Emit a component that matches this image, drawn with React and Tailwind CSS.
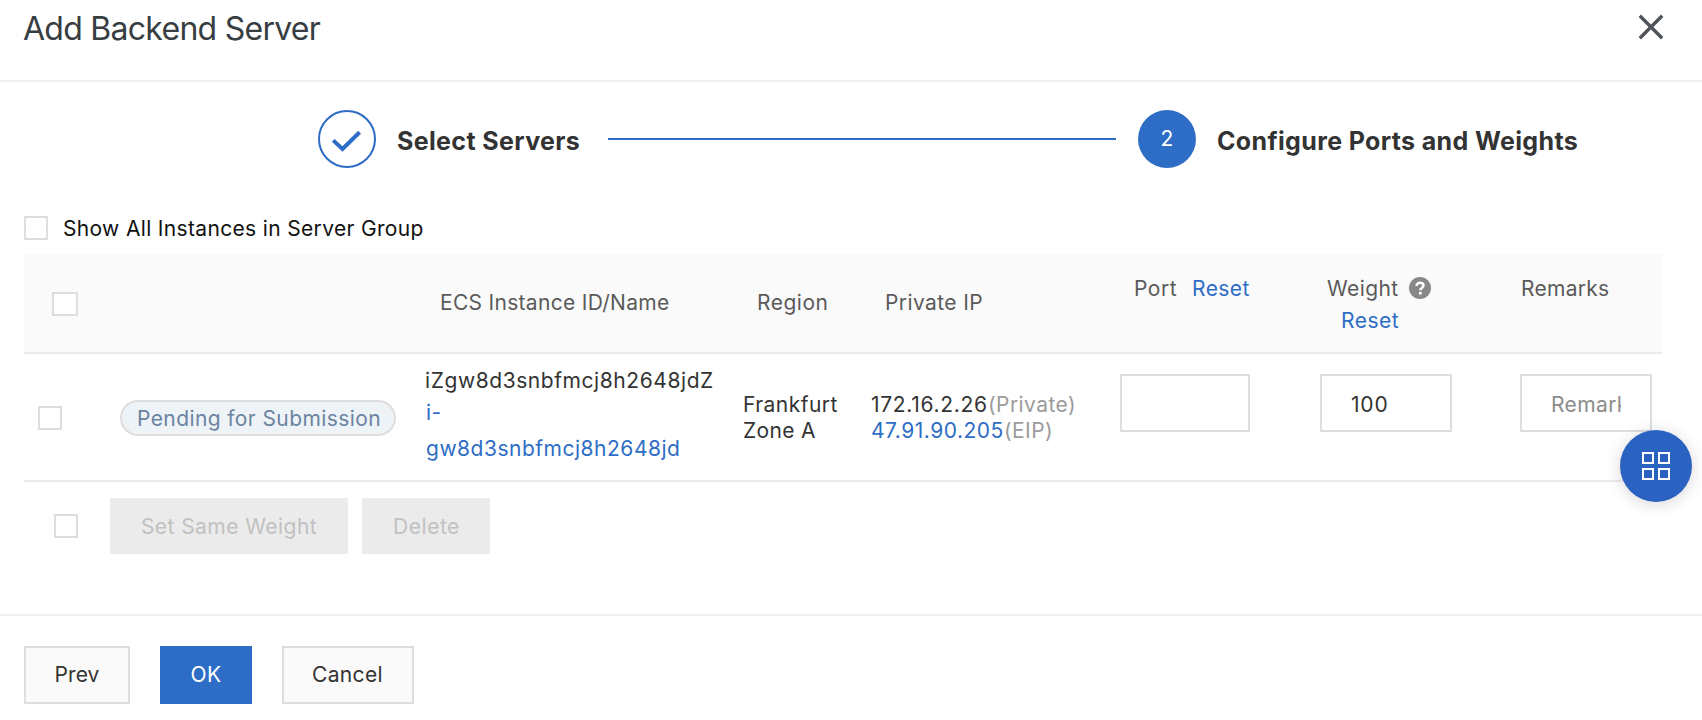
import React from "react";

function Checkbox({ className = "" }) {
  return (
    <span
      role="checkbox"
      aria-checked="false"
      className={"box-border block h-6 w-6 shrink-0 border-2 border-[#dedede] bg-white " + className}
    />
  );
}

function Header() {
  return (
    <header className="flex h-[82px] shrink-0 items-start justify-between border-b-2 border-[#efefef] pr-[37.5px] pl-[23px]">
      <h1 className="mt-[9px] text-[32px] leading-[40px] font-normal tracking-[-0.73px] text-[#373d41]">
        Add Backend Server
      </h1>
      <button aria-label="Close" className="mt-[13px]">
        <svg width="28" height="28" viewBox="0 0 28 28" fill="none" stroke="#50545a" strokeWidth="3.4">
          <path d="M2.8 2.8 25.2 25.2M25.2 2.8 2.8 25.2" />
        </svg>
      </button>
    </header>
  );
}

function Steps() {
  return (
    <div className="flex h-[58px] items-center pl-[318px]">
      <span className="flex h-[58px] w-[58px] shrink-0 rounded-full border-2 border-[#2e6dc5]">
        <svg width="54" height="54" viewBox="2 2 54 54" fill="none" stroke="#2e6dc5" strokeWidth="4">
          <path d="M15.2 30.4 24.5 39 41.6 22.2" />
        </svg>
      </span>
      <span className="w-[232px] pt-[4px] pl-[21px] text-[25px] leading-[30px] font-bold tracking-[0.36px] text-[#333333]">
        Select Servers
      </span>
      <span className="h-[2px] w-[508px] shrink-0 bg-[#2e6dc5]" />
      <span className="ml-[22px] flex h-[58px] w-[58px] shrink-0 items-center justify-center rounded-full bg-[#2e6dc5] text-[21px] leading-[26px] text-white">
        2
      </span>
      <span className="pt-[4px] pl-[21px] text-[25px] leading-[30px] font-bold tracking-[0.36px] whitespace-nowrap text-[#333333]">
        Configure Ports and Weights
      </span>
    </div>
  );
}

function HelpIcon() {
  return (
    <svg width="22" height="22" viewBox="0 0 22 22" className="mb-[2px] ml-[10px] block">
      <circle cx="11" cy="11" r="11" fill="#888888" />
      <path
        d="M7.6 8.9C7.6 6.9 9 5.7 11 5.7s3.5 1.1 3.5 2.9c0 2.4-3.2 2.3-3.2 4.6"
        fill="none"
        stroke="#fff"
        strokeWidth="2.5"
      />
      <rect x="9.9" y="14.9" width="2.7" height="2.7" fill="#fff" />
    </svg>
  );
}

const columns = "grid grid-cols-[96px_306px_317px_129px_248px_200px_200px_142px]";

function ServerTable() {
  return (
    <div className="w-[1638px]">
      <div className={columns + " h-[100px] items-center border-b-2 border-[#ebebeb] bg-[#fafafa] text-[#5a5a5a]"}>
        <div className="pt-[2px] pl-7">
          <Checkbox className="w-[26px]" />
        </div>
        <div />
        <div className="pl-[14px] tracking-[0.3px]">ECS Instance ID/Name</div>
        <div className="pl-[14px] tracking-[0.5px]">Region</div>
        <div className="pl-[13px] tracking-[0.4px]">Private IP</div>
        <div className="flex self-start pt-[19px] pl-[14px] leading-[32px]">
          <span className="w-[58px] tracking-[0.5px]">Port</span>
          <a className="tracking-[0.43px] text-[#2e6dc5]">Reset</a>
        </div>
        <div className="self-start pt-[19px] pl-[7px] leading-[32px]">
          <div className="flex items-center">
            <span className="tracking-[0.4px]">Weight</span>
            <HelpIcon />
          </div>
          <a className="block pl-[14px] tracking-[0.5px] text-[#2e6dc5]">Reset</a>
        </div>
        <div className="self-start pt-[19px] pl-px leading-[32px] tracking-[0.27px]">Remarks</div>
      </div>

      <div className={columns + " h-[128px] items-center border-b-2 border-[#ebebeb] text-[#333333]"}>
        <div className="pt-[2px] pl-[14px]">
          <Checkbox />
        </div>
        <div>
          <span className="mt-[2px] flex h-9 w-[276px] items-center justify-center rounded-full border-2 border-[#dedede] bg-[#eef3f8] pt-[2px] pl-[2px] tracking-[0.4px] text-[#6b84a0]">
            Pending for Submission
          </span>
        </div>
        <div className="self-start pt-[13px]">
          <div className="-ml-px leading-[28px] tracking-[0.57px]">iZgw8d3snbfmcj8h2648jdZ</div>
          <a className="block w-[286px] leading-[36px] tracking-[0.51px] text-[#2e6dc5]">
            i-
            <br />
            gw8d3snbfmcj8h2648jd
          </a>
        </div>
        <div className="pt-[2px] leading-[26px]">
          <div className="tracking-[0.46px]">Frankfurt</div>
          <div className="tracking-[0.33px]">Zone A</div>
        </div>
        <div className="-ml-px pt-[2px] leading-[26px]">
          <div className="flex">
            <span className="w-[117px] tracking-[0.7px]">172.16.2.26</span>
            <span className="tracking-[0.43px] text-[#9b9b9b]">(Private)</span>
          </div>
          <div className="flex">
            <a className="w-[133px] tracking-[0.5px] text-[#2e6dc5]">47.91.90.205</a>
            <span className="tracking-[0.42px] text-[#9b9b9b]">(EIP)</span>
          </div>
        </div>
        <input
          aria-label="Port"
          className="mt-5 h-[58px] w-[130px] self-start border-2 border-[#dedede] bg-white px-[30px]"
        />
        <input
          aria-label="Weight"
          defaultValue="100"
          className="mt-5 h-[58px] w-[132px] self-start border-2 border-[#dedede] bg-white px-[29px] pt-[2px] tracking-[0.8px] text-[#333333]"
        />
        <input
          aria-label="Remarks"
          placeholder="Remarks"
          className="mt-5 h-[58px] w-[132px] self-start border-2 border-[#dedede] bg-white px-[29px] pt-[2px] tracking-[0.4px] placeholder:text-[#8c8c8c]"
        />
      </div>

      <div className="mt-4 flex h-14 items-center pl-[30px] text-[#c1c1c1]">
        <Checkbox />
        <button className="ml-8 h-14 w-[238px] bg-[#ebebeb] pt-[2px] tracking-[0.45px]">Set Same Weight</button>
        <button className="ml-[14px] h-14 w-[128px] bg-[#ebebeb] pt-[2px] pl-px tracking-[0.52px]">Delete</button>
      </div>
    </div>
  );
}

function Footer() {
  return (
    <footer className="flex h-[106px] shrink-0 items-start border-t-2 border-[#efefef] pt-[30px] pl-6 text-[#333333]">
      <button className="h-[58px] w-[106px] border-2 border-[#dedede] bg-[#fafafa] tracking-[0.07px]">Prev</button>
      <button className="ml-[30px] h-[58px] w-[92px] bg-[#2e6dc5] tracking-[0.44px] text-white">OK</button>
      <button className="ml-[30px] h-[58px] w-[132px] border-2 border-[#dedede] bg-[#fafafa] pr-px tracking-[0.34px]">
        Cancel
      </button>
    </footer>
  );
}

function AppsButton() {
  return (
    <button
      aria-label="Apps"
      className="absolute top-[430px] right-[10px] flex h-[72px] w-[72px] items-center justify-center rounded-full bg-[#2a62c2] shadow-[0_2px_16px_rgba(0,0,0,0.16)]"
    >
      <span className="grid grid-cols-2 gap-1">
        <span className="h-3 w-3 border-2 border-white" />
        <span className="h-3 w-3 border-2 border-white" />
        <span className="h-3 w-3 border-2 border-white" />
        <span className="h-3 w-3 border-2 border-white" />
      </span>
    </button>
  );
}

export default function App() {
  return (
    <div className="relative flex h-[720px] w-[1702px] flex-col overflow-hidden bg-white font-['Inter',sans-serif] text-[21px] leading-[26px]">
      <Header />
      <main className="flex-1 pt-7">
        <Steps />
        <div className="pl-6">
          <label className="mt-12 mb-[14px] flex h-6 items-center text-[#111111]">
            <Checkbox />
            <span className="ml-[15px] pt-[2px] tracking-[0.34px]">Show All Instances in Server Group</span>
          </label>
          <ServerTable />
        </div>
      </main>
      <Footer />
      <AppsButton />
    </div>
  );
}
